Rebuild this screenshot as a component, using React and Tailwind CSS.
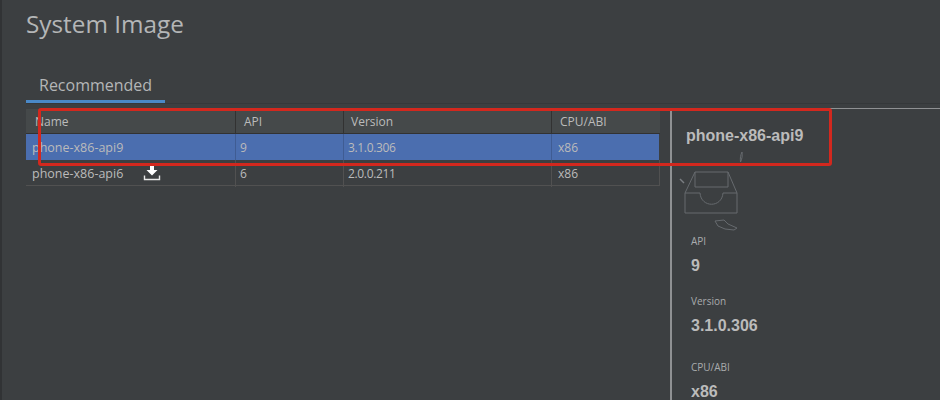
import { Fragment } from "react";

const columns = ["Name", "API", "Version", "CPU/ABI"];

const rows = [
  { name: "phone-x86-api9", api: "9", version: "3.1.0.306", abi: "x86", selected: true },
  { name: "phone-x86-api6", api: "6", version: "2.0.0.211", abi: "x86", download: true },
];

const details = [
  { label: "API", value: "9", gap: "mb-[19px]" },
  { label: "Version", value: "3.1.0.306", gap: "mb-[25px]" },
  { label: "CPU/ABI", value: "x86", gap: "" },
];

const gridCols = "grid grid-cols-[210px_108px_208px_108px]";
const headerPad = ["pl-[9px]", "pl-[8px]", "pl-[7px]", "pl-[8px]"];
const cellPad = [
  "pl-[6px] text-[12.5px]",
  "pl-[4px] text-[12px]",
  "pl-[4px] text-[12px] tracking-[-0.35px]",
  "pl-[6px] text-[12px]",
];

const DownloadIcon = () => (
  <svg width="18" height="17" viewBox="0 0 18 17" className="absolute left-[117px] top-[4px]">
    <path d="M7 0h4v6h3.500L9 11.500 3.500 6H7z" fill="#ffffff" />
    <path d="M1.500 11.500v4h15v-4" fill="none" stroke="#e8e8e8" strokeWidth="1.4" />
  </svg>
);

// empty inbox tray shown above the details
const TrayIcon = () => (
  <svg width="70" height="82" viewBox="0 0 70 82" fill="none" stroke="#666a6e" strokeWidth="1" className="ml-[3px] mt-[4px]">
    <path d="M20 22h33l9 21v20H10V43z" />
    <path d="M10 43h15c1 15 22 15 23 0h14" />
    <path d="M20 22v15M53 22v15M20 37h33" />
    <path d="M67 2c-1.500 3-2 6-1.500 10 1.500-3 2-6 1.500-10z" />
    <path d="M5 29l4 4" stroke="#7b7f83" strokeWidth="1.500" />
    <path d="M40 71l9-1 4 4 9 4-3 2-9-1-7-3z" />
  </svg>
);

const App = () => (
  <div className="relative h-[400px] w-[940px] overflow-hidden bg-[#3c3f41] font-['Open_Sans',sans-serif] text-[#bbbbbb]">
    <div className="absolute inset-y-0 left-0 w-[2px] bg-[#313335]" />

    <h1 className="pl-[26px] pt-[7px] text-[24.3px] leading-[34px] text-[#b4b6b7]">System Image</h1>

    {/* tab strip */}
    <div className="ml-[26px] mt-[28px] border-b border-[#35383a]">
      <div className="h-[34px] w-[139px] border-b-[3px] border-[#4a88c7] pl-[13px] text-[16px] leading-[32px] text-[#b4b6b7]">
        Recommended
      </div>
    </div>

    <div className="ml-[26px] mt-[5px] flex items-start">
      {/* table */}
      <div className="w-[634px] text-[12px] text-[#bbbbbb]">
        <div className={`${gridCols} h-[25px] border-b border-[#323232] bg-[#45494a] leading-[25px]`}>
          {columns.map((col, i) => (
            <div key={col} className={`border-r border-[#323232] last:border-r-0 ${headerPad[i]}`}>
              {col}
            </div>
          ))}
        </div>
        {rows.map((row) => (
          <div
            key={row.name}
            className={`${gridCols} h-[26px] border-b leading-[27px] ${
              row.selected ? "mr-[1px] border-[#4b6eaf] bg-[#4b6eaf]" : "border-r border-[#515151]"
            }`}
          >
            {[row.name, row.api, row.version, row.abi].map((cell, i) => (
              <div
                key={i}
                className={`relative ${cellPad[i]} ${i < 3 ? "border-r" : ""} ${
                  row.selected ? "border-[#3f5c93]" : "border-[#515151]"
                }`}
              >
                {cell}
                {i === 0 && row.download && <DownloadIcon />}
              </div>
            ))}
          </div>
        ))}
      </div>

      {/* details panel */}
      <div className="-mt-[1px] ml-[10px] h-[300px] w-[270px] border-l-2 border-t border-[#8f9193]">
        <div className="pl-[14px] pt-[17px] font-['Liberation_Sans',sans-serif] text-[16px] font-bold leading-[20px] text-[#bbbbbb]">
          phone-x86-api9
        </div>
        <TrayIcon />
        <div className="pl-[19px] pt-[2px] font-['Liberation_Sans',sans-serif]">
          {details.map((item) => (
            <Fragment key={item.label}>
              <div className="font-['Open_Sans',sans-serif] text-[10px] leading-[14px] text-[#a9abad]">{item.label}</div>
              <div className={`mt-[9px] text-[16px] font-bold leading-[18px] text-[#bbbbbb] ${item.gap}`}>{item.value}</div>
            </Fragment>
          ))}
        </div>
      </div>
    </div>

    {/* red annotation drawn over the screenshot */}
    <div className="absolute left-[38px] top-[108px] h-[58px] w-[794px] rounded-[3px] border-[3px] border-[#d3281e]" />
  </div>
);

export default App;
